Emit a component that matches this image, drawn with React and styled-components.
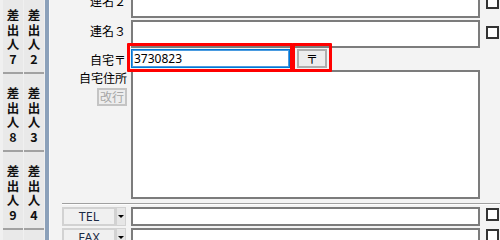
import React from 'react';
import styled, { createGlobalStyle } from 'styled-components';

const GlobalStyle = createGlobalStyle`
  html, body { margin: 0; padding: 0; }
  body {
    width: 500px;
    height: 240px;
    overflow: hidden;
    background: #f3f3f3;
    font-family: "Noto Sans CJK JP", "Noto Sans", sans-serif;
  }
`;

const Screen = styled.div`
  display: flex;
  width: 500px;
  height: 240px;
  overflow: hidden;
`;

const TabStrip = styled.div`
  display: flex;
  flex: none;
  width: 50px;
  padding-left: 3px;
  box-sizing: border-box;
  background: #f0f0f0;
`;

const TabColumn = styled.div`
  display: flex;
  flex-direction: column;
  width: 20px;
  margin-top: -4px;
  margin-right: 1px;
`;

const Tab = styled.div`
  display: flex;
  flex-direction: column;
  align-items: center;
  flex: none;
  height: 78px;
  box-sizing: border-box;
  padding-top: 12px;
  background: #e9e9e9;
  border-bottom: 2px solid #a2a2a2;
  font-size: 12.5px;
  font-weight: bold;
  line-height: 14.5px;
  color: #111;
`;

const BlueBar = styled.div`
  width: 4px;
  margin-left: 0px;
  background: #8ca1ba;
  border-right: 1px solid #fbfbfb;
`;

const Main = styled.div`
  flex: 1;
  display: flex;
  flex-direction: column;
  margin-top: -10px;
`;

const Row = styled.div`
  display: grid;
  grid-template-columns: 81px 349px 20px;
  height: ${p => p.$h}px;
  margin-bottom: ${p => p.$mb || 0}px;
  flex: none;
`;

const Label = styled.div`
  text-align: right;
  padding-right: 5px;
  padding-top: ${p => p.$pt || 0}px;
  font-size: 12px;
  line-height: 16px;
  color: #000;
`;

const LabelStack = styled.div`
  display: flex;
  flex-direction: column;
  align-items: flex-end;
  padding-right: 4px;
  font-size: 12px;
  line-height: 16px;
`;

const Field = styled.div`
  height: 100%;
  box-sizing: border-box;
  background: #fff;
  border: 2px solid #7c7c7c;
`;

const CheckCell = styled.div`
  padding-left: 6px;
  padding-top: ${p => p.$pt || 0}px;
`;

const Check = styled.div`
  width: 13px;
  height: 13px;
  box-sizing: border-box;
  background: #fff;
  border: 2px solid #333;
`;

const ZipCell = styled.div`
  position: relative;
  display: flex;
  align-items: flex-start;
  gap: 7px;
  padding-top: 1px;
`;

const ZipInput = styled.div`
  width: 159px;
  height: 19px;
  box-sizing: border-box;
  padding-left: 2px;
  background: #fff;
  border: 1px solid #0078d7;
  box-shadow: inset 0 0 0 1px #4a9be0;
  font-family: "Noto Sans", sans-serif;
  font-size: 12px;
  line-height: 17px;
  color: #000;
`;

const SmallButton = styled.div`
  width: ${p => p.$w}px;
  height: ${p => p.$h}px;
  box-sizing: border-box;
  display: flex;
  align-items: center;
  justify-content: center;
  background: #ededed;
  border: 2px solid ${p => (p.$disabled ? '#c4c4c4' : '#adadad')};
  font-size: 12px;
  color: ${p => (p.$disabled ? '#a6a6a6' : '#000')};
`;

const RedBox = styled.div`
  position: absolute;
  top: -5px;
  height: 29px;
  box-sizing: border-box;
  border: 3px solid #ff0000;
  border-radius: 1px;
`;

const Separator = styled.div`
  flex: none;
  height: 1px;
  margin: 4px 0 2px 12px;
  background: #a0a0a0;
  border-bottom: 1px solid #fdfdfd;
`;

const ComboCell = styled.div`
  display: flex;
  padding-left: 12px;
`;

const ComboText = styled.div`
  width: 54px;
  height: 19px;
  box-sizing: border-box;
  display: flex;
  align-items: center;
  justify-content: center;
  background: #f0f0f0;
  border: 2px solid #d2d2d2;
  font-family: "Noto Sans", sans-serif;
  font-size: 12.5px;
  color: #1b2a44;
`;

const ComboArrow = styled.div`
  width: 10px;
  height: 19px;
  box-sizing: border-box;
  display: flex;
  align-items: center;
  justify-content: center;
  background: #e6e6e6;
  border: 1px solid #d2d2d2;

  &::after {
    content: '';
    border-left: 3px solid transparent;
    border-right: 3px solid transparent;
    border-top: 3px solid #000;
  }
`;

const tabsLeft = ['7', '8', '9', '5'];
const tabsRight = ['2', '3', '4', '5'];

function TabCol({ nums }) {
  return (
    <TabColumn>
      {nums.map((n, i) => (
        <Tab key={i}>
          <span>差</span>
          <span>出</span>
          <span>人</span>
          <span>{n}</span>
        </Tab>
      ))}
    </TabColumn>
  );
}

function PhoneRow({ kind }) {
  return (
    <Row $h={19} $mb={2}>
      <ComboCell>
        <ComboText>{kind}</ComboText>
        <ComboArrow />
      </ComboCell>
      <Field />
      <CheckCell $pt={1}>
        <Check />
      </CheckCell>
    </Row>
  );
}

export default function App() {
  return (
    <>
      <GlobalStyle />
      <Screen>
        <TabStrip>
          <TabCol nums={tabsLeft} />
          <TabCol nums={tabsRight} />
          <BlueBar />
        </TabStrip>
        <Main>
          <Row $h={28} $mb={2}>
            <Label $pt={3}>連名２</Label>
            <Field />
            <CheckCell $pt={6}>
              <Check />
            </CheckCell>
          </Row>
          <Row $h={28}>
            <Label $pt={3}>連名３</Label>
            <Field />
            <CheckCell $pt={6}>
              <Check />
            </CheckCell>
          </Row>
          <Row $h={22}>
            <Label $pt={4}>自宅〒</Label>
            <ZipCell>
              <ZipInput>3730823</ZipInput>
              <SmallButton $w={30} $h={19}>〒</SmallButton>
              <RedBox style={{ left: -4, width: 166 }} />
              <RedBox style={{ left: 161, width: 40 }} />
            </ZipCell>
            <div />
          </Row>
          <Row $h={129}>
            <LabelStack>
              <span>自宅住所</span>
              <SmallButton $w={30} $h={18} $disabled style={{ marginTop: 2 }}>
                改行
              </SmallButton>
            </LabelStack>
            <Field />
            <div />
          </Row>
          <Separator />
          <PhoneRow kind="TEL" />
          <PhoneRow kind="FAX" />
        </Main>
      </Screen>
    </>
  );
}
